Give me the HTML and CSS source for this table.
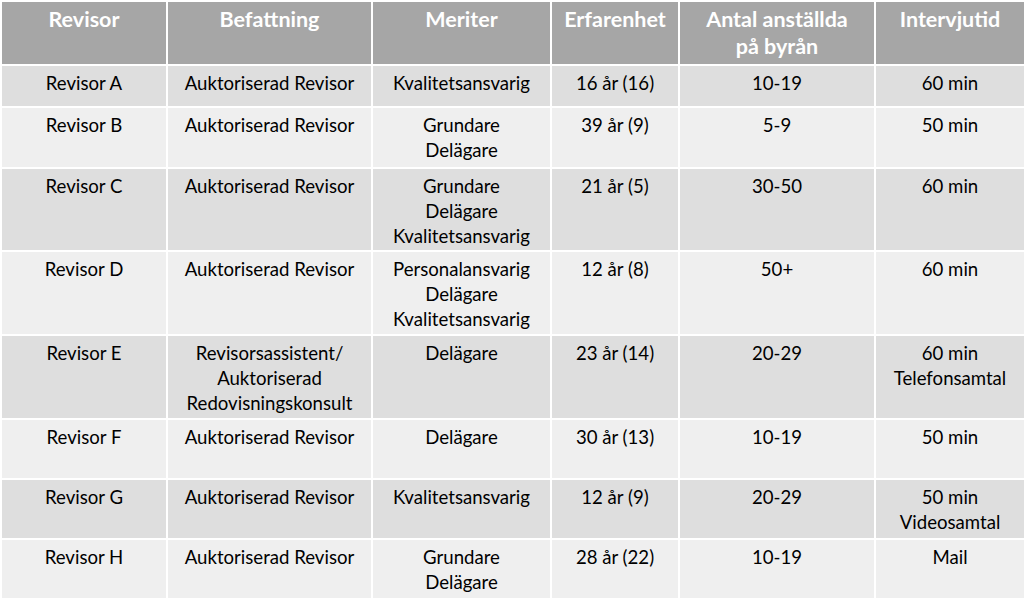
FILE: index.html
```html
<!DOCTYPE html>
<html lang="sv">
<head>
<meta charset="utf-8">
<link rel="stylesheet" href="styles.css">
</head>
<body>
<table class="grid">
  <colgroup>
    <col class="c1"><col class="c2"><col class="c3"><col class="c4"><col class="c5"><col class="c6">
  </colgroup>
  <thead>
    <tr class="head">
      <th>Revisor</th><th>Befattning</th><th>Meriter</th><th>Erfarenhet</th><th>Antal anställda<br>på byrån</th><th>Intervjutid</th>
    </tr>
  </thead>
  <tbody>
    <tr class="dark h42">
      <td>Revisor A</td><td>Auktoriserad Revisor</td><td>Kvalitetsansvarig</td><td>16 år (16)</td><td>10-19</td><td>60 min</td>
    </tr>
    <tr class="light h61">
      <td>Revisor B</td><td>Auktoriserad Revisor</td><td>Grundare<br>Delägare</td><td>39 år (9)</td><td>5-9</td><td>50 min</td>
    </tr>
    <tr class="dark h83">
      <td>Revisor C</td><td>Auktoriserad Revisor</td><td>Grundare<br>Delägare<br>Kvalitetsansvarig</td><td>21 år (5)</td><td>30-50</td><td>60 min</td>
    </tr>
    <tr class="light h84">
      <td>Revisor D</td><td>Auktoriserad Revisor</td><td>Personalansvarig<br>Delägare<br>Kvalitetsansvarig</td><td>12 år (8)</td><td>50+</td><td>60 min</td>
    </tr>
    <tr class="dark h84">
      <td>Revisor E</td><td>Revisorsassistent/<br>Auktoriserad<br>Redovisningskonsult</td><td>Delägare</td><td>23 år (14)</td><td>20-29</td><td>60 min<br>Telefonsamtal</td>
    </tr>
    <tr class="light h60">
      <td>Revisor F</td><td>Auktoriserad Revisor</td><td>Delägare</td><td>30 år (13)</td><td>10-19</td><td>50 min</td>
    </tr>
    <tr class="dark h60">
      <td>Revisor G</td><td>Auktoriserad Revisor</td><td>Kvalitetsansvarig</td><td>12 år (9)</td><td>20-29</td><td>50 min<br>Videosamtal</td>
    </tr>
    <tr class="light h60">
      <td>Revisor H</td><td>Auktoriserad Revisor</td><td>Grundare<br>Delägare</td><td>28 år (22)</td><td>10-19</td><td>Mail</td>
    </tr>
  </tbody>
</table>
</body>
</html>
```

FILE: styles.css
```css
html, body {
  margin: 0;
  padding: 0;
  background: #ffffff;
}
body {
  width: 1024px;
  height: 598px;
  overflow: hidden;
  font-family: Lato, "Liberation Sans", sans-serif;
}
.grid {
  width: 1024px;
  table-layout: fixed;
  border-collapse: collapse;
}
.c1 { width: 166px; }
.c2 { width: 205px; }
.c3 { width: 179px; }
.c4 { width: 128px; }
.c5 { width: 196px; }
.c6 { width: 150px; }
.grid th, .grid td {
  border: 2px solid #ffffff;
  text-align: center;
  vertical-align: top;
  padding: 4px 0 0;
  box-sizing: border-box;
  white-space: nowrap;
}
.grid th {
  background: #a6a6a6;
  color: #ffffff;
  font-weight: 700;
  font-size: 21.5px;
  line-height: 27px;
  height: 64px;
}
.grid td {
  color: #000000;
  font-size: 18.6px;
  line-height: 25px;
  padding-top: 5px;
}
.dark td { background: #dedede; }
.light td { background: #efefef; }
.h42 td { height: 42px; }
.h60 td { height: 60px; }
.h61 td { height: 61px; }
.h83 td { height: 83px; }
.h84 td { height: 84px; }
```
